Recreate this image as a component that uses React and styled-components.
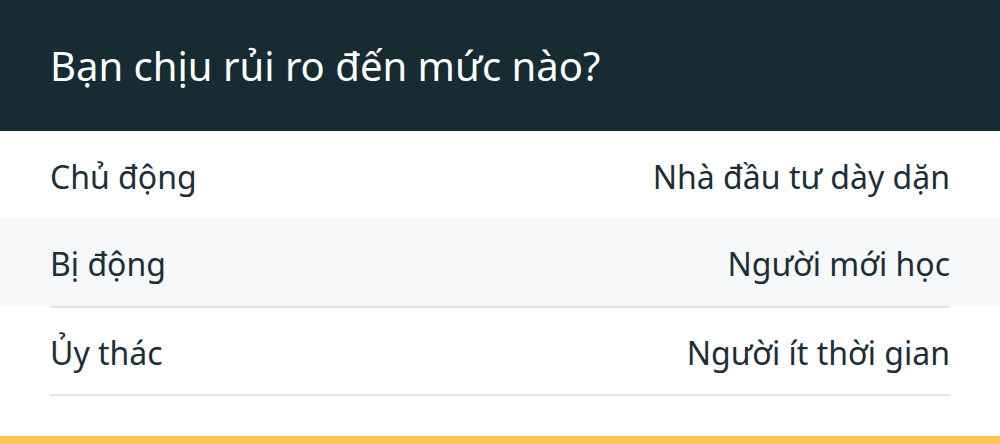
import React from "react";
import styled, { createGlobalStyle } from "styled-components";

const GlobalStyle = createGlobalStyle`
  html, body { margin: 0; padding: 0; background: #ffffff; }
  body { font-family: "Noto Sans", "Open Sans", sans-serif; }
  * { box-sizing: border-box; }
`;

const Page = styled.div`
  width: 1000px;
  height: 444px;
  display: flex;
  flex-direction: column;
  background: #ffffff;
  overflow: hidden;
`;

const Header = styled.header`
  height: 131px;
  background: #172b32;
  display: flex;
  align-items: center;
  padding: 0 50px;
`;

const Title = styled.h1`
  margin: 0;
  font-weight: 400;
  font-size: 40px;
  color: #ffffff;
  line-height: 1;
`;

const List = styled.div`
  display: flex;
  flex-direction: column;
  flex: 1;
`;

const Row = styled.div`
  height: ${(p) => p.$h}px;
  background: ${(p) => (p.$shaded ? "#f6f8fa" : "#ffffff")};
  display: flex;
  align-items: center;
  justify-content: space-between;
  padding: 4px 50px 0;
  font-size: 32px;
  color: #1c2f38;
`;

const Label = styled.span`
  line-height: 1;
`;

const Divider = styled.div`
  height: 2px;
  margin: 0 50px;
  background: #e0e6eb;
`;

const Footer = styled.div`
  height: 8px;
  background: #fdc653;
  margin-top: auto;
`;

const rows = [
  { left: "Chủ động", right: "Nhà đầu tư dày dặn", h: 87, divider: false },
  { left: "Bị động", right: "Người mới học", h: 88, shaded: true, divider: true },
  { left: "Ủy thác", right: "Người ít thời gian", h: 86, divider: true },
];

export default function App() {
  return (
    <Page>
      <GlobalStyle />
      <Header>
        <Title>Bạn chịu rủi ro đến mức nào?</Title>
      </Header>
      <List>
        {rows.map((r) => (
          <React.Fragment key={r.left}>
            <Row $h={r.h} $shaded={r.shaded}>
              <Label>{r.left}</Label>
              <Label>{r.right}</Label>
            </Row>
            {r.divider && <Divider />}
          </React.Fragment>
        ))}
        <Footer />
      </List>
    </Page>
  );
}
